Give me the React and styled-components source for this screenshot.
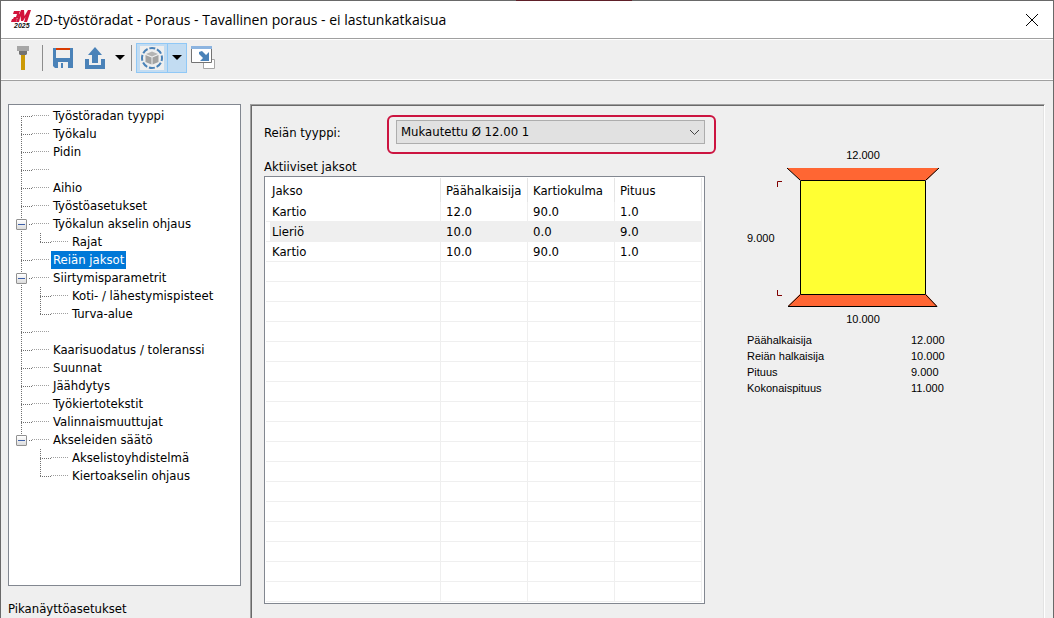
import React, { useState } from "react";
import styled, { createGlobalStyle, css } from "styled-components";

const treeData = [
  { id: "type", label: "Työstöradan tyyppi" },
  { id: "tool", label: "Työkalu" },
  { id: "holder", label: "Pidin" },
  { id: "gap1" },
  { id: "stock", label: "Aihio" },
  { id: "cut", label: "Työstöasetukset" },
  {
    id: "axis",
    label: "Työkalun akselin ohjaus",
    children: [{ id: "limits", label: "Rajat" }],
  },
  { id: "segments", label: "Reiän jaksot" },
  {
    id: "linking",
    label: "Siirtymisparametrit",
    children: [
      { id: "home", label: "Koti- / lähestymispisteet" },
      { id: "safety", label: "Turva-alue" },
    ],
  },
  { id: "gap2" },
  { id: "arc", label: "Kaarisuodatus / toleranssi" },
  { id: "planes", label: "Suunnat" },
  { id: "coolant", label: "Jäähdytys" },
  { id: "canned", label: "Työkiertotekstit" },
  { id: "misc", label: "Valinnaismuuttujat" },
  {
    id: "control",
    label: "Akseleiden säätö",
    children: [
      { id: "combo", label: "Akselistoyhdistelmä" },
      { id: "rotary", label: "Kiertoakselin ohjaus" },
    ],
  },
];

const columns = ["Jakso", "Päähalkaisija", "Kartiokulma", "Pituus"];

const segments = [
  ["Kartio", "12.0", "90.0", "1.0"],
  ["Lieriö", "10.0", "0.0", "9.0"],
  ["Kartio", "10.0", "90.0", "1.0"],
];

const ROW_COUNT = 20;

const summary = [
  ["Päähalkaisija", "12.000"],
  ["Reiän halkaisija", "10.000"],
  ["Pituus", "9.000"],
  ["Kokonaispituus", "11.000"],
];

const TreeNode = ({ node, first, last, selected, onSelect }) => {
  const [open, setOpen] = useState(true);
  const children = node.children || [];

  return (
    <li>
      <TreeRow>
        <Rail $from={first ? "middle" : "top"} $to={last ? "middle" : "bottom"}>
          {children.length > 0 && (
            <Expander
              type="button"
              aria-label={node.label}
              aria-expanded={open}
              onClick={() => setOpen(!open)}
            >
              <svg width="9" height="9" viewBox="0 0 9 9">
                <path
                  d={open ? "M1 4.5h7" : "M1 4.5h7M4.5 1v7"}
                  stroke="#3c5fa8"
                />
              </svg>
            </Expander>
          )}
        </Rail>
        {node.label && (
          <TreeLabel
            type="button"
            $active={selected === node.id}
            onClick={() => onSelect(node.id)}
          >
            {node.label}
          </TreeLabel>
        )}
      </TreeRow>
      {open && children.length > 0 && (
        <List>
          {children.map((child, i) => (
            <li key={child.id}>
              <TreeRow>
                <Trunk $visible={!last} />
                <Rail
                  $from="top"
                  $to={i === children.length - 1 ? "middle" : "bottom"}
                />
                <TreeLabel
                  type="button"
                  $active={selected === child.id}
                  onClick={() => onSelect(child.id)}
                >
                  {child.label}
                </TreeLabel>
              </TreeRow>
            </li>
          ))}
        </List>
      )}
    </li>
  );
};

const Logo = () => (
  <svg width="20" height="19" viewBox="0 0 20 19" aria-hidden="true">
    <g fill="#d2143c">
      <path d="M3 1h6L8 4H2z" />
      <path d="M6 4h3L7 8 5 9H2l1-2h2z" />
      <path d="M1 9h5l-1 3H0z" />
      <path d="M10 0h3l.5 6L17 0h3l-4 12h-3l1.500-5-2.500 4h-2l-.5-5L8 12H5z" />
    </g>
    <text
      x="3"
      y="18"
      fontFamily="Liberation Sans, sans-serif"
      fontSize="7"
      fontWeight="700"
      fontStyle="italic"
      fill="#111"
    >
      2025
    </text>
  </svg>
);

const HammerIcon = () => (
  <svg width="14" height="24" viewBox="0 0 14 24">
    <path d="M1 0h12v5H1z" fill="#a6a6a6" />
    <path d="M3 5h8v3l-1 1H4L3 8z" fill="#737373" />
    <path d="M5 9h4v15H5z" fill="#cc9a06" />
  </svg>
);

const SaveIcon = () => (
  <svg width="20" height="20" viewBox="0 0 20 20">
    <path
      d="M0 0h20v20H2l-2-2zM3 2v8h14V2z"
      fill="#4a82b8"
      fillRule="evenodd"
    />
    <path d="M3 0h14v2H3z" fill="#d83b01" />
    <path d="M5 14h10v6H5z" fill="#efefef" />
    <path d="M8 15h2v5H8z" fill="#4a82b8" />
  </svg>
);

const ExportIcon = () => (
  <svg width="20" height="22" viewBox="0 0 20 22" fill="#4a82b8">
    <path d="M10 0l7 8h-4v8H7V8H3z" />
    <path d="M0 12h4v6h12v-6h4v10H0z" />
  </svg>
);

const CaretIcon = () => (
  <svg width="10" height="5" viewBox="0 0 10 5">
    <path d="M0 0h10L5 5z" fill="#000" />
  </svg>
);

const CubeIcon = () => (
  <svg width="24" height="24" viewBox="0 0 24 24">
    <path d="M0 0h24v24H0z" fill="#efefef" />
    <circle
      cx="12"
      cy="12"
      r="10"
      fill="none"
      stroke="#4a82b8"
      strokeWidth="2"
      strokeDasharray="6 1.854"
      strokeDashoffset="3"
    />
    <path d="M12 5.500l6 2.500-6 2.500L6 8z" fill="#b4b4b4" />
    <path d="M5.500 9l6 2.500v7l-6-2.500z" fill="#a3a3a3" />
    <path d="M18.500 9l-6 2.500v7l6-2.500z" fill="#a3a3a3" />
  </svg>
);

const WindowIcon = () => (
  <svg width="24" height="24" viewBox="0 0 24 24">
    <path d="M12.500 13.500h11v9h-11z" fill="#fff" stroke="#a6a6a6" />
    <path d="M.5 1.500h20v15H.5z" fill="#fff" stroke="#737373" />
    <path d="M0 0h21v3H0z" fill="#8cb4e0" />
    <path d="M8 6l3-1 4 4 3-3v9H9l3-3-4-4z" fill="#4a82b8" />
  </svg>
);

const HoleDiagram = () => (
  <svg width="200" height="180" viewBox="0 0 200 180" role="img">
    <path d="M40 20h152l-12 12H53z" fill="#ff6633" />
    <path d="M53 146h126l11 12H41z" fill="#ff6633" />
    <path d="M53.500 32.500h125v114h-125z" fill="#ffff33" stroke="#000" />
    <path
      d="M40 20l13 12M192 20l-13 12M53 147l-12 11.500h149L179 147"
      fill="none"
      stroke="#000"
    />
    <path
      d="M30.500 39v-5.500H35M30.500 142v5.500H35"
      fill="none"
      stroke="#800000"
    />
    <g fontFamily="Liberation Sans, Arial, sans-serif" fontSize="11">
      <text x="116" y="11" textAnchor="middle">
        12.000
      </text>
      <text x="0" y="94">
        9.000
      </text>
      <text x="116" y="175" textAnchor="middle">
        10.000
      </text>
    </g>
  </svg>
);

const App = () => {
  const [selected, setSelected] = useState("segments");
  const [activeRow, setActiveRow] = useState(1);

  const rows = Array.from({ length: ROW_COUNT }, (_, i) => segments[i] || []);

  return (
    <>
      <GlobalStyle />
      <Dialog>
        <TopEdge />
        <TitleBar>
          <Logo />
          <Title>
            2D-työstöradat - Poraus - Tavallinen poraus - ei lastunkatkaisua
          </Title>
          <CloseButton type="button" aria-label="Sulje">
            <svg width="12" height="12" viewBox="0 0 12 12">
              <path d="M0 0l12 12M12 0L0 12" stroke="#000" />
            </svg>
          </CloseButton>
        </TitleBar>

        <Toolbar>
          <ToolButton type="button" aria-label="Työkalu">
            <HammerIcon />
          </ToolButton>
          <Separator />
          <ToolButton type="button" aria-label="Tallenna">
            <SaveIcon />
          </ToolButton>
          <ToolButton type="button" aria-label="Vie">
            <ExportIcon />
          </ToolButton>
          <CaretButton type="button" aria-label="Vientivalinnat">
            <CaretIcon />
          </CaretButton>
          <Separator />
          <SplitButton>
            <SplitPart type="button" aria-label="Näkymä">
              <CubeIcon />
            </SplitPart>
            <SplitCaret type="button" aria-label="Näkymävalinnat">
              <CaretIcon />
            </SplitCaret>
          </SplitButton>
          <ToolButton type="button" aria-label="Pienennä">
            <WindowIcon />
          </ToolButton>
        </Toolbar>

        <Body>
          <Sidebar>
            <TreeBox>
              <List>
                {treeData.map((node, i) => (
                  <TreeNode
                    key={node.id}
                    node={node}
                    first={i === 0}
                    last={i === treeData.length - 1}
                    selected={selected}
                    onSelect={setSelected}
                  />
                ))}
              </List>
            </TreeBox>
            <SidebarCaption>Pikanäyttöasetukset</SidebarCaption>
          </Sidebar>

          <Panel>
            <Settings>
              <Field>
                <FieldLabel htmlFor="hole-type">Reiän tyyppi:</FieldLabel>
                <Highlight>
                  <Select id="hole-type" defaultValue="custom">
                    <option value="custom">Mukautettu Ø 12.00 1</option>
                  </Select>
                  <Chevron width="11" height="7" viewBox="0 0 11 7">
                    <path d="M1 1l4.500 4.500L10 1" fill="none" stroke="#444" />
                  </Chevron>
                </Highlight>
              </Field>
              <TableCaption id="segments-caption">Aktiiviset jaksot</TableCaption>
              <TableBox>
                <Table aria-labelledby="segments-caption">
                  <colgroup>
                    <col />
                    <NumberCol />
                    <NumberCol />
                    <NumberCol />
                  </colgroup>
                  <thead>
                    <tr>
                      {columns.map((name) => (
                        <HeadCell key={name} scope="col">
                          {name}
                        </HeadCell>
                      ))}
                    </tr>
                  </thead>
                  <tbody>
                    {rows.map((row, i) => (
                      <Row
                        key={i}
                        $active={i === activeRow}
                        onClick={() => row.length && setActiveRow(i)}
                      >
                        {columns.map((name, c) => (
                          <Cell key={name}>{row[c]}</Cell>
                        ))}
                      </Row>
                    ))}
                  </tbody>
                </Table>
              </TableBox>
            </Settings>

            <Preview>
              <HoleDiagram />
              <Summary>
                {summary.map(([name, value]) => (
                  <React.Fragment key={name}>
                    <dt>{name}</dt>
                    <dd>{value}</dd>
                  </React.Fragment>
                ))}
              </Summary>
            </Preview>
          </Panel>
        </Body>
      </Dialog>
    </>
  );
};

const uiFont = `"DejaVu Sans Condensed", Tahoma, "DejaVu Sans", sans-serif`;

const GlobalStyle = createGlobalStyle`
  *,
  *::before,
  *::after {
    box-sizing: border-box;
  }

  body {
    margin: 0;
    background: #efefef;
    color: #000;
    font: 13px/18px ${uiFont};
  }

  button,
  select {
    font: inherit;
    color: inherit;
  }
`;

const Dialog = styled.div`
  display: flex;
  flex-direction: column;
  min-height: 100vh;
  border: solid #696969;
  border-width: 0 1px;
`;

const TopEdge = styled.div`
  height: 1px;
  background: linear-gradient(
    to right,
    #696969 49%,
    #5e1f28 49% 60%,
    #696969 60%
  );
`;

const TitleBar = styled.header`
  display: flex;
  align-items: center;
  gap: 4px;
  height: 37px;
  padding: 0 13px 0 10px;
  background: #fff;
`;

const Title = styled.h1`
  flex: 1;
  margin: 0;
  font: 400 14px/20px "Open Sans", "Noto Sans", sans-serif;
  white-space: nowrap;
`;

const buttonReset = css`
  display: flex;
  align-items: center;
  justify-content: center;
  margin: 0;
  padding: 0;
  border: 0;
  background: none;
`;

const CloseButton = styled.button`
  ${buttonReset}
  width: 16px;
  height: 16px;
`;

const Toolbar = styled.div`
  display: flex;
  align-items: center;
  height: 43px;
  padding: 0 6px 4px;
  border-top: 1px solid #a0a0a0;
  border-bottom: 1px solid #a0a0a0;
  box-shadow: inset 0 1px #fff, inset 0 -1px #fff;
`;

const ToolButton = styled.button`
  ${buttonReset}
  width: 32px;
  height: 30px;
`;

const CaretButton = styled.button`
  ${buttonReset}
  width: 17px;
  height: 30px;
`;

const Separator = styled.span`
  width: 1px;
  height: 26px;
  margin: 0 4px 0 3px;
  background: #8c8c8c;
`;

const SplitButton = styled.div`
  display: flex;
  height: 30px;
  border: 1px solid #90c8f6;
  background: #c2dcf2;
`;

const SplitPart = styled.button`
  ${buttonReset}
  width: 31px;
  border-right: 1px solid #90c8f6;
`;

const SplitCaret = styled.button`
  ${buttonReset}
  width: 18px;
`;

const Body = styled.main`
  display: flex;
  flex: 1;
  gap: 9px;
  padding: 23px 8px 0 7px;
`;

const Sidebar = styled.nav`
  display: flex;
  flex-direction: column;
  flex: 0 0 233px;
`;

const TreeBox = styled.div`
  flex: 1;
  padding: 2px 7px;
  border: 1px solid #828790;
  background: #fff;
`;

const List = styled.ul`
  margin: 0;
  padding: 0;
  list-style: none;
`;

const TreeRow = styled.div`
  display: flex;
  height: 18px;
  padding-left: 5px;
`;

const dots = (direction, color) =>
  `repeating-linear-gradient(${direction}, ${color} 0 1px, transparent 1px 2px)`;

const railSpan = ({ $from, $to }) => {
  if ($from === "middle") return "0 9px / 1px 9px";
  if ($to === "middle") return "0 0 / 1px 9px";
  return "0 0 / 1px 18px";
};

const Rail = styled.span`
  position: relative;
  flex: none;
  width: 30px;
  background:
    ${dots("to bottom", "#707070")} ${railSpan} no-repeat,
    ${dots("to right", "#707070")} 0 9px / 11px 1px no-repeat,
    ${dots("to right", "#a0a0a0")} 11px 8px / 17px 1px no-repeat;
`;

const Trunk = styled.span`
  flex: none;
  width: 19px;
  background: ${(props) =>
    props.$visible
      ? `${dots("to bottom", "#707070")} 0 0 / 1px 18px no-repeat`
      : "none"};
`;

const Expander = styled.button`
  ${buttonReset}
  position: absolute;
  top: 4px;
  left: -5px;
  width: 11px;
  height: 11px;
  border: 1px solid #919191;
  border-radius: 1px;
  background: linear-gradient(#fff, #dcdcdc);
  box-shadow: 0 0 0 1px #fff;
`;

const TreeLabel = styled.button`
  margin: 0;
  padding: 0 2px;
  border: 0;
  line-height: 18px;
  white-space: nowrap;
  background: ${(props) => (props.$active ? "#0078d7" : "transparent")};
  color: ${(props) => (props.$active ? "#fff" : "#000")};
`;

const SidebarCaption = styled.div`
  padding-top: 14px;
`;

const Panel = styled.section`
  display: flex;
  flex: 1;
  gap: 31px;
  padding: 10px 8px 14px 13px;
  border: solid;
  border-width: 1px 1px 0;
  border-color: #a0a0a0 #fff #a0a0a0 #a0a0a0;
  box-shadow: inset 1px 1px #696969, inset -1px 0 #e3e3e3;
`;

const Settings = styled.div`
  flex: 0 1 452px;
  min-width: 0;
`;

const Field = styled.div`
  display: grid;
  grid-template-columns: 123px 1fr;
  align-items: center;
`;

const FieldLabel = styled.label`
  padding-bottom: 4px;
`;

const Highlight = styled.div`
  position: relative;
  padding: 3px 9px 8px 7px;
  border: 2px solid #cc1440;
  border-radius: 6px;
`;

const Select = styled.select`
  display: block;
  width: 100%;
  height: 24px;
  padding: 0 4px;
  border: 1px solid #adadad;
  border-radius: 0;
  background: #e1e1e1;
  appearance: none;
`;

const Chevron = styled.svg`
  position: absolute;
  top: 12px;
  right: 14px;
  pointer-events: none;
`;

const TableCaption = styled.div`
  padding-top: 4px;
`;

const TableBox = styled.div`
  margin-right: 11px;
  padding: 1px 2px 1px 1px;
  border: 1px solid #828790;
  background: #fff;
`;

const Table = styled.table`
  width: 100%;
  table-layout: fixed;
  border-collapse: separate;
  border-spacing: 0;
`;

const NumberCol = styled.col`
  width: 87px;
`;

const HeadCell = styled.th`
  height: 24px;
  padding: 2px 5px 0;
  border-right: 1px solid #e5e5e5;
  font-weight: 400;
  text-align: left;
  white-space: nowrap;

  &:first-child {
    padding-left: 6px;
  }
`;

const Cell = styled.td`
  height: 20px;
  padding: 1px 5px 0;
  border-right: 1px solid #efefef;
  border-bottom: 1px solid #efefef;

  &:first-child {
    padding-left: 6px;
    box-shadow: inset 4px 0 #fff;
  }
`;

const Row = styled.tr`
  background: ${(props) => (props.$active ? "#efefef" : "#fff")};
`;

const Preview = styled.aside`
  flex: 1;
  padding-top: 33px;
  font: 11px/16px "Liberation Sans", Arial, sans-serif;

  svg {
    display: block;
  }
`;

const Summary = styled.dl`
  display: grid;
  grid-template-columns: 164px auto;
  justify-content: start;
  margin: 4px 0 0;

  dd {
    margin: 0;
  }
`;

export default App;
